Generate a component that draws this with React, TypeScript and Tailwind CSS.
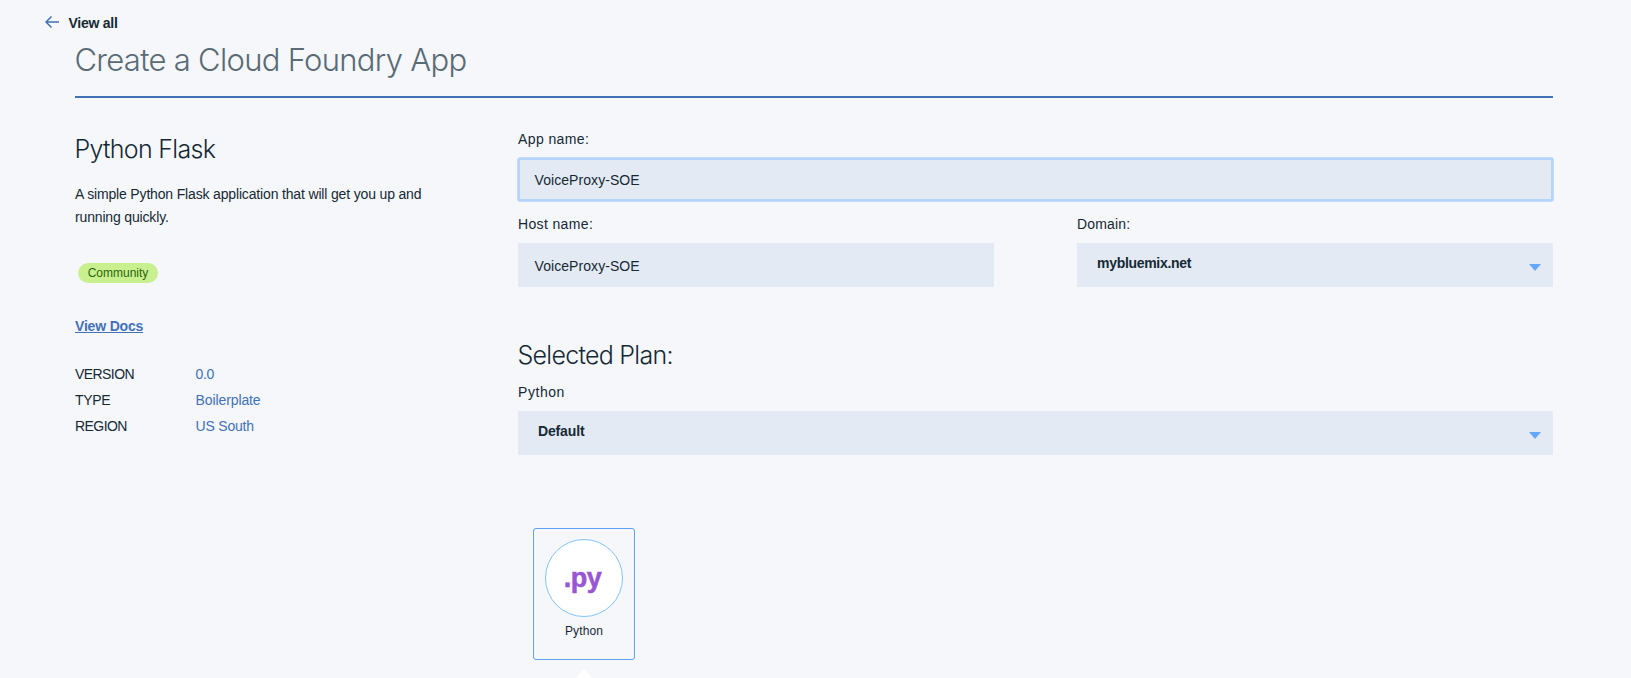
import type { ReactNode } from "react";

const details = [
  { label: "VERSION", value: "0.0", labelClass: "tracking-[-0.57px]", valueClass: "tracking-[-0.3px]" },
  { label: "TYPE", value: "Boilerplate", labelClass: "tracking-[-0.3px]", valueClass: "tracking-[-0.1px]" },
  { label: "REGION", value: "US South", labelClass: "tracking-[-0.55px]", valueClass: "tracking-[-0.2px]" },
];

function Label({ children, className }: { children: ReactNode; className: string }) {
  return <div className={`text-[14px] leading-5 ${className}`}>{children}</div>;
}

function Select({ value, className }: { value: string; className: string }) {
  return (
    <div className="mt-[9px] flex h-11 items-center justify-between bg-[#e3eaf4] pr-3">
      <span className={`-mt-1 text-[14px] leading-5 font-bold ${className}`}>{value}</span>
      <svg className="mt-1 h-[7px] w-3" viewBox="0 0 12 7">
        <path d="M0 0h12L6 7z" fill="#64a8fb" />
      </svg>
    </div>
  );
}

export default function App() {
  return (
    <div className="h-[678px] overflow-hidden bg-[#f5f7fb] pr-[78px] pl-[75px] font-['Liberation_Sans',Arial,sans-serif] text-[#152934]">
      <div className="-ml-[30px] flex h-[33px] items-end">
        <svg className="mb-[5px] h-3 w-[14px]" viewBox="0 0 14 12" fill="none" stroke="#4271b8" strokeWidth="1.5">
          <path d="M14 6H1M6.5 0.5L1 6l5.500 5.500" />
        </svg>
        <a className="ml-[9.5px] text-[14px] leading-5 font-bold tracking-[-0.25px]">View all</a>
      </div>
      <h1 className="-ml-[0.5px] mt-1.5 h-[59px] pt-px font-[Inter,sans-serif] text-[31px] leading-10 font-[300] tracking-[-0.7px] text-[#5a6b75]">
        Create a Cloud Foundry App
      </h1>
      <div className="-mt-0.5 h-0.5 bg-[#4271b8]" />

      <div className="flex">
        <aside className="w-[443px] shrink-0 pt-[35px]">
          <h2 className="-ml-[0.5px] font-[Inter,sans-serif] text-[25px] leading-8 font-[320] tracking-[-0.7px]">Python Flask</h2>
          <p className="mt-[18px] w-[365px] text-[14px] leading-[23px] tracking-[-0.16px]">
            A simple Python Flask application that will get you up and running quickly.
          </p>
          <div className="mt-[34px] ml-[3px] flex h-5 w-20 items-center justify-center rounded-full bg-[#c8f08f] text-[12px] text-[#2d660a]">
            Community
          </div>
          <a className="mt-[33px] block text-[14px] leading-5 font-bold tracking-[-0.18px] text-[#4271b8] underline decoration-1 underline-offset-1">
            View Docs
          </a>
          <dl className="mt-[25px] text-[14px] leading-[26px]">
            {details.map((d) => (
              <div key={d.label} className="flex">
                <dt className={`w-[120.5px] ${d.labelClass}`}>{d.label}</dt>
                <dd className={`text-[#4271b8] ${d.valueClass}`}>{d.value}</dd>
              </div>
            ))}
          </dl>
        </aside>

        <main className="flex-1 pt-[31px]">
          <Label className="tracking-[0.4px]">App name:</Label>
          <div className="-mx-px mt-2 rounded-[3px] border border-[#c3dbfa] bg-[#b4d4fc]">
            <div className="flex h-[43px] items-center rounded-[2px] border-2 border-[#b4d4fc] bg-[#e3eaf4] pt-[2px] pl-[14.5px] text-[14px] tracking-[0.07px]">
              VoiceProxy-SOE
            </div>
          </div>

          <div className="mt-3 flex justify-between">
            <div className="w-[476px]">
              <Label className="tracking-[0.36px]">Host name:</Label>
              <div className="mt-[9px] flex h-11 items-center bg-[#e3eaf4] pt-[3px] pl-[16.5px] text-[14px] tracking-[0.07px]">VoiceProxy-SOE</div>
            </div>
            <div className="w-[476px]">
              <Label className="tracking-[0.15px]">Domain:</Label>
              <Select value="mybluemix.net" className="pl-5 tracking-[-0.3px]" />
            </div>
          </div>

          <h2 className="mt-[52px] -ml-[0.5px] font-[Inter,sans-serif] text-[25px] leading-8 font-[320] tracking-[-0.73px]">Selected Plan:</h2>
          <Label className="mt-[11px] tracking-[0.55px]">Python</Label>
          <Select value="Default" className="pl-5 tracking-[-0.15px]" />

          <div className="mt-[73px] ml-[15px] flex w-[102px] flex-col items-center">
            <div className="flex h-[132px] w-full flex-col items-center rounded-[3px] border border-[#5aa3f5] pt-2.5">
              <div className="flex size-[78px] items-center justify-center rounded-full border border-[#83c2fa] bg-white">
                <span className="-mt-px -ml-[3px] text-[27px] leading-8 font-bold tracking-[-0.5px] text-[#9855d4] [-webkit-text-stroke:0.5px_#9855d4]">
                  .py
                </span>
              </div>
              <span className="mt-1.5 text-[12px] leading-4 tracking-[0.1px]">Python</span>
            </div>
            <svg className="mt-[8.5px] h-[11px] w-[22px]" viewBox="0 0 22 11">
              <path d="M11 0l11 11H0z" fill="#fff" />
            </svg>
          </div>
        </main>
      </div>
    </div>
  );
}
